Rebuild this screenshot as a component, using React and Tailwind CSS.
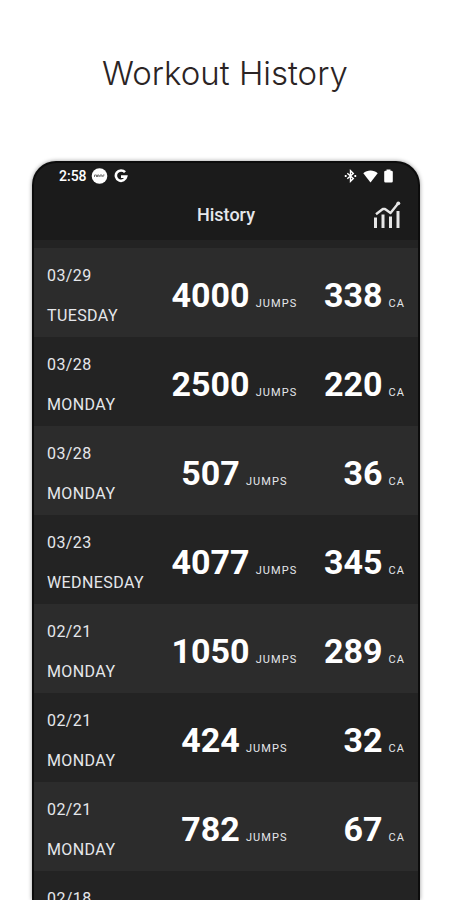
import React from 'react';

const workouts = [
  { date: '03/29', day: 'TUESDAY', jumps: 4000, calories: 338 },
  { date: '03/28', day: 'MONDAY', jumps: 2500, calories: 220 },
  { date: '03/28', day: 'MONDAY', jumps: 507, calories: 36 },
  { date: '03/23', day: 'WEDNESDAY', jumps: 4077, calories: 345 },
  { date: '02/21', day: 'MONDAY', jumps: 1050, calories: 289 },
  { date: '02/21', day: 'MONDAY', jumps: 424, calories: 32 },
  { date: '02/21', day: 'MONDAY', jumps: 782, calories: 67 },
  { date: '02/18', day: '', jumps: null, calories: null },
];

const StatusBar = () => (
  <div className="flex h-[26px] items-center justify-between px-[25px] text-white">
    <div className="flex items-center gap-1">
      <span className="text-sm font-medium">2:58</span>
      <svg width="17" height="16" viewBox="0 0 17 16" aria-hidden="true">
        <circle cx="8.5" cy="8" r="7.8" fill="#fff" />
        <path d="M3.500 9V7h2v2M6.500 9V7H8v2M9 9V7h2v2M12 9V7h1.500" fill="none" stroke="#777" strokeWidth="1" />
      </svg>
      <svg className="ml-0.5" width="14" height="14" viewBox="0 0 14 14" aria-hidden="true">
        <path d="M11 3.200A5.200 5.200 0 1 0 12.200 7.600H7" fill="none" stroke="#fff" strokeWidth="2.600" />
      </svg>
    </div>
    <div className="flex items-center gap-1.5">
      <svg width="13" height="14" viewBox="0 0 13 14" aria-hidden="true">
        <path d="M3.300 4.300l6 5.200L6.500 12.300V1.700l2.800 2.800L3.300 9.700" fill="none" stroke="#fff" strokeWidth="1.400" />
        <path d="M.8 7h1.800M10.400 7h1.800" stroke="#fff" strokeWidth="1.800" />
      </svg>
      <svg width="15" height="13" viewBox="0 0 15 13" aria-hidden="true">
        <path d="M.3 3.200C4.200-.4 10.800-.4 14.700 3.200L7.500 12.600z" fill="#fff" />
      </svg>
      <svg width="9" height="14" viewBox="0 0 9 14" aria-hidden="true">
        <path d="M2.500.5h4v1.300h1A1.300 1.300 0 0 1 8.800 3v9.200a1.300 1.300 0 0 1-1.300 1.300h-6A1.300 1.300 0 0 1 .2 12.200V3a1.300 1.300 0 0 1 1.300-1.200h1z" fill="#fff" />
      </svg>
    </div>
  </div>
);

const ChartIcon = () => (
  <svg width="28" height="28" viewBox="0 0 28 28" fill="none" stroke="#e6e6e6" aria-hidden="true">
    <path d="M2.500 16.500V27M10 13.500V27M17.500 15.500V27M25 10v17" strokeWidth="3" />
    <path d="M3 13.200L9.800 8L12 8L17.500 12L25.500 2" strokeWidth="2.400" strokeLinejoin="round" />
    <circle cx="25.300" cy="2.300" r="1.900" fill="#e6e6e6" stroke="none" />
  </svg>
);

const Stat = ({ value, unit }) => (
  <div className="flex items-baseline gap-1.5">
    <span className="text-[34px] leading-10 font-bold text-white">{value}</span>
    <span className="text-[11px] tracking-widest text-gray-200">{unit}</span>
  </div>
);

const WorkoutRow = ({ workout }) => (
  <li className="flex h-[89px] shrink-0 items-start px-[13px] pt-[18px] odd:bg-[#2c2c2c] even:bg-[#232323]">
    <div className="flex w-[105px] flex-col gap-5 text-base leading-5 tracking-wide text-gray-200">
      <span>{workout.date}</span>
      <span>{workout.day}</span>
    </div>
    {workout.jumps !== null && (
      <>
        <div className="flex flex-1 justify-center pt-[9px]">
          <Stat value={workout.jumps} unit="JUMPS" />
        </div>
        <div className="flex w-[88px] justify-end pt-[9px]">
          <Stat value={workout.calories} unit="CA" />
        </div>
      </>
    )}
  </li>
);

const App = () => {
  return (
    <div className="flex h-screen flex-col overflow-hidden bg-white font-[Roboto,sans-serif]">
      {/* Page title */}
      <h1 className="pt-[53px] pb-[68px] text-center font-[Inter,sans-serif] text-[33px] leading-10 font-light text-[#2b2424]">
        Workout History
      </h1>

      {/* Phone */}
      <main className="mr-[30px] ml-8 flex min-h-0 flex-1 flex-col overflow-hidden rounded-t-3xl border-2 border-b-0 border-[#0c0c0c] bg-[#1b1b1b] shadow-[0_0_4px_rgba(0,0,0,0.4)]">
        <StatusBar />
        <header className="grid h-[51px] shrink-0 grid-cols-3 items-center px-[17px]">
          <h2 className="col-start-2 text-center text-lg font-medium text-gray-200">History</h2>
          <button type="button" aria-label="Statistics" className="justify-self-end">
            <ChartIcon />
          </button>
        </header>
        <ul className="flex min-h-0 flex-1 flex-col overflow-hidden border-t-8 border-[#232323]">
          {workouts.map((workout, idx) => (
            <WorkoutRow key={idx} workout={workout} />
          ))}
        </ul>
      </main>
    </div>
  );
};

export default App;
